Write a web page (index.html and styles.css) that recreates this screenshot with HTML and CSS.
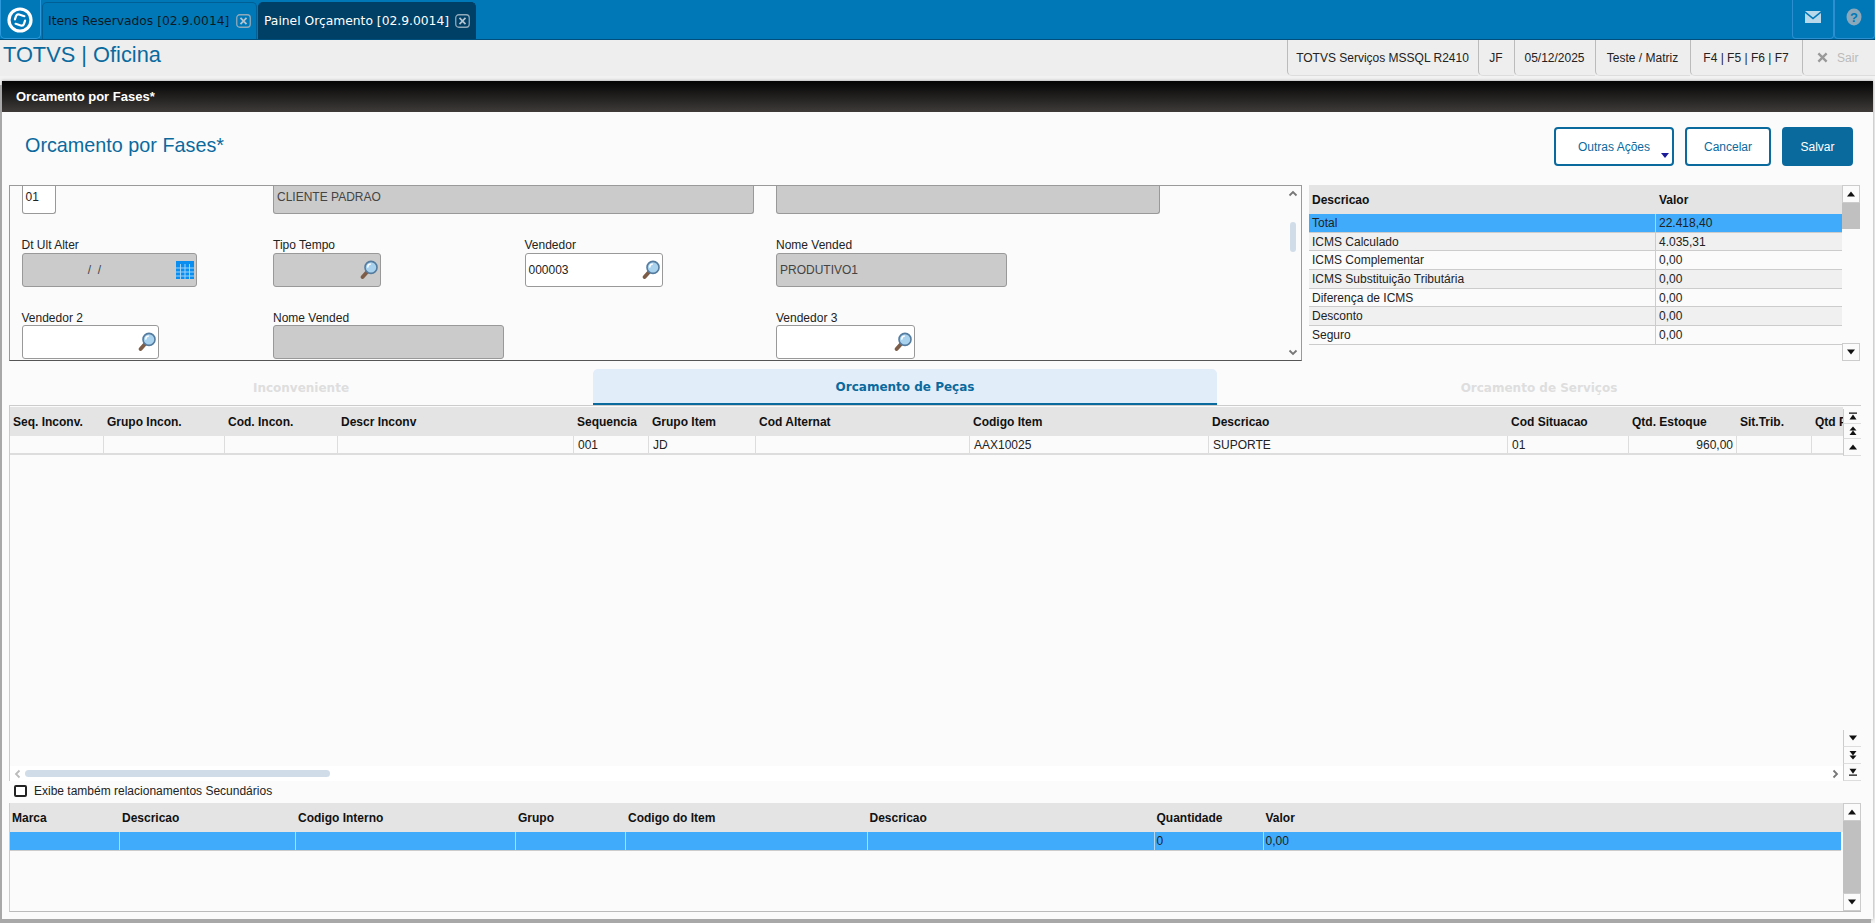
FILE: index.html
```html
<!DOCTYPE html>
<html lang="pt-BR">
<head>
<meta charset="utf-8">
<title>TOTVS | Oficina</title>
<link rel="stylesheet" href="styles.css">
</head>
<body>
<svg class="defs" width="0" height="0" aria-hidden="true">
  <defs>
    <symbol id="lupa" viewBox="0 0 18 20">
      <path d="M7.500 11.500 2.600 17" stroke="#7d5d48" stroke-width="3.800" stroke-linecap="round" fill="none"/>
      <circle cx="11" cy="7.400" r="6" fill="#a9d2ef" stroke="#557c9e" stroke-width="1.600"/>
      <path d="M7.800 7.600a3.400 3.400 0 0 1 3-3.600" stroke="#fff" stroke-width="1.500" fill="none"/>
    </symbol>
    <symbol id="up" viewBox="0 0 10 10"><path d="M5 2.500 9 7.500H1z" fill="#111"/></symbol>
    <symbol id="down" viewBox="0 0 10 10"><path d="M5 7.500 9 2.500H1z" fill="#111"/></symbol>
    <symbol id="first" viewBox="0 0 10 10"><path d="M1 1.500H9V2.700H1zM5 3.500 8.500 8.500H1.500z" fill="#111"/></symbol>
    <symbol id="last" viewBox="0 0 10 10"><path d="M1 7.500H9V8.700H1zM5 6.700 8.500 1.700H1.500z" fill="#111"/></symbol>
    <symbol id="pgup" viewBox="0 0 10 10"><path d="M5 0.500 8.500 4.500H1.500zM5 4.500 8.500 9H1.500z" fill="#111"/></symbol>
    <symbol id="pgdn" viewBox="0 0 10 10"><path d="M5 9.500 8.500 5.500H1.500zM5 5.500 8.500 1H1.500z" fill="#111"/></symbol>
    <symbol id="chev-up" viewBox="0 0 10 10"><path d="M1.500 6.500 5 3l3.500 3.500" stroke="#777" stroke-width="1.800" fill="none"/></symbol>
    <symbol id="chev-down" viewBox="0 0 10 10"><path d="M1.500 3.500 5 7l3.500-3.500" stroke="#777" stroke-width="1.800" fill="none"/></symbol>
    <symbol id="chev-left" viewBox="0 0 10 10"><path d="M6.500 1.500 3 5l3.500 3.500" stroke="#bbb" stroke-width="1.800" fill="none"/></symbol>
    <symbol id="chev-right" viewBox="0 0 10 10"><path d="M3.500 1.500 7 5 3.500 8.500" stroke="#777" stroke-width="1.800" fill="none"/></symbol>
    <symbol id="fechar" viewBox="0 0 15 14">
      <rect x="0.750" y="0.750" width="13.500" height="12.500" rx="3" fill="none" stroke="#8fa9ba" stroke-width="1.300"/>
      <path d="M4.500 3.800 10.500 10.200M10.500 3.800 4.500 10.200" stroke="#b5c5d0" stroke-width="1.700"/>
    </symbol>
  </defs>
</svg>

<nav class="topbar">
  <div class="logo-tab">
    <svg class="logo" viewBox="0 0 26 26" width="26" height="26" aria-label="TOTVS">
      <circle cx="13" cy="13" r="11" fill="none" stroke="#fff" stroke-width="3.200"/>
      <g transform="rotate(18 13 13)" fill="none" stroke="#fff" stroke-width="2.200" stroke-linecap="round">
        <path d="M8 14V10.500A2.500 2.500 0 0 1 10.500 8H16"/>
        <path d="M18 12V15.500A2.500 2.500 0 0 1 15.500 18H10"/>
      </g>
    </svg>
  </div>
  <div class="tab">
    <span>Itens Reservados [02.9.0014]</span>
    <svg class="tab-x" width="15" height="14"><use href="#fechar"/></svg>
  </div>
  <div class="tab tab-on">
    <span>Painel Orçamento [02.9.0014]</span>
    <svg class="tab-x" width="15" height="14"><use href="#fechar"/></svg>
  </div>
  <div class="top-actions">
    <div class="top-btn">
      <svg viewBox="0 0 16 12" width="16" height="12" aria-label="Mensagens"><path d="M0 0H16L8 6.500z" fill="#b9d9ea"/><path d="M0 2 8 8.500 16 2V12H0z" fill="#b9d9ea"/></svg>
    </div>
    <div class="top-btn">
      <svg viewBox="0 0 16 18" width="16" height="18" aria-label="Ajuda"><ellipse cx="8" cy="9" rx="7.500" ry="8.500" fill="#8aa8ba"/><text x="8" y="14" class="help-mark">?</text></svg>
    </div>
  </div>
</nav>

<header class="appbar">
  <div class="brand">TOTVS | Oficina</div>
  <ul class="status">
    <li class="s1">TOTVS Serviços MSSQL R2410</li>
    <li class="s2">JF</li>
    <li class="s3">05/12/2025</li>
    <li class="s4">Teste / Matriz</li>
    <li class="s5">F4 | F5 | F6 | F7</li>
    <li class="s6"><svg viewBox="0 0 12 12" width="11" height="11" aria-hidden="true"><path d="M1.500 1.500 10.500 10.500M10.500 1.500 1.500 10.500" stroke="#999" stroke-width="2.600"/></svg><span>Sair</span></li>
  </ul>
</header>

<main class="window">
  <div class="window-bar">Orcamento por Fases*</div>

  <div class="title-row">
    <h1>Orcamento por Fases*</h1>
    <div class="actions">
      <button class="btn btn-more">Outras Ações<i class="caret"></i></button>
      <button class="btn btn-cancel">Cancelar</button>
      <button class="btn btn-save">Salvar</button>
    </div>
  </div>

  <section class="upper">
    <div class="form-panel">
      <div class="form">
        <div class="cell cell-top"><div class="input cut w-a">01</div></div>
        <div class="cell cell-top"><div class="input cut off w-b">CLIENTE PADRAO</div></div>
        <div class="cell cell-top"></div>
        <div class="cell cell-top"><div class="input cut off w-c"></div></div>

        <div class="cell"><label>Dt Ult Alter</label>
          <div class="input off w-d date"><span class="date-mask">/&nbsp;&nbsp;/</span>
            <svg class="cal" viewBox="0 0 18 18" width="18" height="18" aria-hidden="true">
              <rect width="18" height="18" fill="#0a8ff0"/>
              <path d="M0 7H18M0 11H18M0 15H18M4.500 3V18M9 3V18M13.500 3V18" stroke="#9ed2f8" stroke-width="1"/>
            </svg>
          </div></div>
        <div class="cell"><label>Tipo Tempo</label>
          <div class="input off w-e"><svg class="lupa" width="18" height="20"><use href="#lupa"/></svg></div></div>
        <div class="cell"><label>Vendedor</label>
          <div class="input w-f">000003<svg class="lupa" width="18" height="20"><use href="#lupa"/></svg></div></div>
        <div class="cell"><label>Nome Vended</label>
          <div class="input off w-g">PRODUTIVO1</div></div>

        <div class="cell cell-low"><label>Vendedor 2</label>
          <div class="input w-h"><svg class="lupa" width="18" height="20"><use href="#lupa"/></svg></div></div>
        <div class="cell cell-low"><label>Nome Vended</label>
          <div class="input off w-i"></div></div>
        <div class="cell"></div>
        <div class="cell cell-low"><label>Vendedor 3</label>
          <div class="input w-j"><svg class="lupa" width="18" height="20"><use href="#lupa"/></svg></div></div>
      </div>
      <div class="thin-scroll">
        <svg width="10" height="10"><use href="#chev-up"/></svg>
        <div class="thin-track"><div class="thin-thumb"></div></div>
        <svg width="10" height="10"><use href="#chev-down"/></svg>
      </div>
    </div>

    <div class="totals">
      <div class="totals-body">
        <div class="t-row t-head"><div>Descricao</div><div>Valor</div></div>
        <div class="t-row t-sel"><div>Total</div><div>22.418,40</div></div>
        <div class="t-row t-alt"><div>ICMS Calculado</div><div>4.035,31</div></div>
        <div class="t-row"><div>ICMS Complementar</div><div>0,00</div></div>
        <div class="t-row t-alt"><div>ICMS Substituição Tributária</div><div>0,00</div></div>
        <div class="t-row"><div>Diferença de ICMS</div><div>0,00</div></div>
        <div class="t-row t-alt"><div>Desconto</div><div>0,00</div></div>
        <div class="t-row"><div>Seguro</div><div>0,00</div></div>
      </div>
      <div class="vbar vbar-totals">
        <div class="vbtn vbtn-a"><svg width="10" height="10"><use href="#up"/></svg></div>
        <div class="vthumb vthumb-totals"></div>
        <div class="vspace"></div>
        <div class="vbtn vbtn-a"><svg width="10" height="10"><use href="#down"/></svg></div>
      </div>
    </div>
  </section>

  <div class="tabs">
    <div class="ptab ptab-1">Inconveniente</div>
    <div class="ptab ptab-2 ptab-on">Orcamento de Peças</div>
    <div class="ptab ptab-3">Orcamento de Serviços</div>
  </div>

  <section class="pecas">
    <div class="pecas-main">
      <div class="m-clip">
        <div class="m-row m-head">
          <div>Seq. Inconv.</div><div>Grupo Incon.</div><div>Cod. Incon.</div><div>Descr Inconv</div><div>Sequencia</div><div>Grupo Item</div><div>Cod Alternat</div><div>Codigo Item</div><div>Descricao</div><div>Cod Situacao</div><div>Qtd. Estoque</div><div>Sit.Trib.</div><div>Qtd Pedida</div>
        </div>
        <div class="m-row m-data">
          <div></div><div></div><div></div><div></div><div>001</div><div>JD</div><div></div><div>AAX10025</div><div>SUPORTE</div><div>01</div><div class="num">960,00</div><div></div><div></div>
        </div>
      </div>
      <div class="hbar">
        <svg width="10" height="10"><use href="#chev-left"/></svg>
        <div class="hthumb"></div>
        <div class="hspace"></div>
        <svg width="10" height="10"><use href="#chev-right"/></svg>
      </div>
    </div>
    <div class="vbar vbar-main">
      <div class="vbtn vbtn-s"><svg width="10" height="10"><use href="#first"/></svg></div>
      <div class="vbtn vbtn-s"><svg width="10" height="10"><use href="#pgup"/></svg></div>
      <div class="vbtn"><svg width="10" height="10"><use href="#up"/></svg></div>
      <div class="vspace"></div>
      <div class="vbtn"><svg width="10" height="10"><use href="#down"/></svg></div>
      <div class="vbtn"><svg width="10" height="10"><use href="#pgdn"/></svg></div>
      <div class="vbtn"><svg width="10" height="10"><use href="#last"/></svg></div>
    </div>
  </section>

  <label class="check"><i class="box"></i>Exibe também relacionamentos Secundários</label>

  <section class="marcas">
    <div class="marcas-body">
      <div class="k-row k-head"><div>Marca</div><div>Descricao</div><div>Codigo Interno</div><div>Grupo</div><div>Codigo do Item</div><div>Descricao</div><div>Quantidade</div><div>Valor</div></div>
      <div class="k-row k-sel"><div></div><div></div><div></div><div></div><div></div><div></div><div>0</div><div>0,00</div></div>
    </div>
    <div class="vbar vbar-marcas">
      <div class="vbtn vbtn-a"><svg width="10" height="10"><use href="#up"/></svg></div>
      <div class="vthumb vthumb-marcas"></div>
      <div class="vbtn vbtn-a"><svg width="10" height="10"><use href="#down"/></svg></div>
    </div>
  </section>
</main>
</body>
</html>
```

FILE: styles.css
```css
* { box-sizing: border-box; }
html, body { margin: 0; padding: 0; }
body {
  width: 1875px;
  height: 923px;
  overflow: hidden;
  background: #f2f2f2;
  font: 12px "Liberation Sans", Arial, sans-serif;
  color: #222;
}
.defs { position: absolute; }

/* top tab bar */
.topbar {
  display: flex;
  height: 40px;
  background: #0078b8;
  border-bottom: 1px solid #004f7c;
}
.logo-tab {
  width: 41px;
  height: 39px;
  padding: 7px 0 0 6px;
  border: 1px solid #2b98dc;
  border-top: 0;
  border-radius: 0 0 5px 5px;
}
.logo { display: block; }
.tab {
  display: flex;
  align-items: center;
  width: 215px;
  height: 37px;
  margin: 2px 0 0 1px;
  padding: 0 5px 0 5px;
  border: 1px solid #005f94;
  border-bottom: 0;
  border-radius: 5px 5px 0 0;
  font: 12.300px "DejaVu Sans", sans-serif;
  color: #0b1a24;
}
.tab span { flex: 1; white-space: nowrap; }
.tab-on {
  width: 218px;
  background: #003f66;
  border-color: #003f66;
  color: #fff;
}
.tab-x { flex: none; }
.top-actions { display: flex; margin-left: auto; }
.top-btn {
  display: flex;
  align-items: center;
  justify-content: center;
  width: 41.500px;
  height: 39px;
  padding-bottom: 4px;
  border: 1px solid #2b8fd0;
  border-top: 0;
  border-radius: 0 0 4px 4px;
}
.help-mark { font: bold 13px "Liberation Sans", sans-serif; fill: #0078b8; text-anchor: middle; }

/* application bar */
.appbar {
  display: flex;
  justify-content: space-between;
  height: 36px;
  background: #eee;
}
.brand {
  padding: 0 0 0 3px;
  font-size: 21.800px;
  line-height: 30px;
  color: #0a6a9e;
}
.status {
  display: flex;
  margin: 0;
  padding: 0;
  list-style: none;
}
.status li {
  display: flex;
  align-items: center;
  justify-content: center;
  height: 36px;
  border-left: 1px solid #bbb;
  border-bottom: 1px solid #ddd;
  border-radius: 0 0 0 5px;
  color: #222;
}
.s1 { width: 191px; }
.s2 { width: 36px; }
.s3 { width: 81px; }
.s4 { width: 95px; }
.s5 { width: 112px; }
.s6 { width: 73.500px; gap: 9px; padding-right: 2px; }
.status .s6 { color: #bbb; }

/* window */
.window {
  width: 1871px;
  height: 838px;
  margin: 5px 0 0 2px;
  background: #fbfbfb;
  box-shadow: -2px 4px 0 #a8a8a8, 0 0 3px #999;
}
.window-bar {
  height: 31px;
  padding-left: 14px;
  background: linear-gradient(#040404, #3e3b39);
  font-weight: bold;
  font-size: 13px;
  line-height: 31px;
  color: #fff;
}
.title-row {
  display: flex;
  justify-content: space-between;
  height: 73px;
  padding: 15px 20px 0 23px;
}
h1 {
  margin: 0;
  padding-top: 4px;
  font-weight: normal;
  font-size: 19.800px;
  line-height: 28px;
  color: #0a6a9e;
}
.actions { display: flex; gap: 11px; }
.btn {
  height: 39px;
  padding: 0;
  border: 2px solid #0a6a9e;
  border-radius: 4px;
  background: #fff;
  font: 12px "Liberation Sans", sans-serif;
  color: #0a6a9e;
}
.btn-more { display: flex; align-items: center; width: 120px; padding-left: 22px; position: relative; }
.btn-cancel { width: 86px; }
.btn-save { width: 71px; background: #0a6a9e; color: #fff; }
.caret {
  position: absolute;
  right: 3px;
  bottom: 6px;
  border: 4px solid transparent;
  border-top: 5px solid #1b1b9a;
  border-bottom: 0;
}

/* upper section */
.upper { display: flex; height: 176px; padding-left: 7px; gap: 7px; }
.form-panel {
  display: flex;
  width: 1293px;
  height: 176px;
  border: 1px solid #9a9a9a;
  border-bottom-color: #555;
  background: #fbfbfb;
}
.form {
  flex: 1;
  display: grid;
  grid-template-columns: repeat(4, 251.500px);
  grid-template-rows: 28px 72px 72px;
  padding-left: 11.500px;
}
.cell label { display: block; height: 14px; margin-top: 24px; margin-bottom: 1px; line-height: 14px; color: #222; }
.cell-low label { margin-top: 25px; margin-bottom: 0; }
.cell-top { height: 28px; }
.input {
  display: flex;
  align-items: center;
  height: 34px;
  padding-left: 3px;
  border: 1px solid #999;
  border-radius: 3px;
  background: #fff;
  color: #222;
}
.cut { height: 28px; padding-bottom: 6px; border-top: 0; border-radius: 0 0 3px 3px; }
.off { background: #cbcbcb; color: #444; }
.w-a { width: 34px; }
.w-b { width: 481px; }
.w-c { width: 384px; }
.w-d { width: 175px; }
.w-e { width: 108px; }
.w-f { width: 138px; }
.w-g { width: 231px; }
.w-h { width: 137px; }
.w-i { width: 231px; }
.w-j { width: 139px; }
.lupa { margin-left: auto; margin-right: 2px; }
.date { padding: 0 2px 0 0; }
.date-mask { flex: 1; text-align: center; padding-right: 9px; }
.cal { flex: none; }
.thin-scroll {
  display: flex;
  flex-direction: column;
  align-items: center;
  width: 16px;
  padding: 3px 0;
}
.thin-track { flex: 1; width: 6px; padding-top: 23px; }
.thin-thumb { width: 6px; height: 30px; border-radius: 3px; background: #d0dce8; }

.totals { display: flex; width: 551px; height: 176px; }
.totals-body { width: 533px; }
.t-row {
  display: grid;
  grid-template-columns: 347px 186px;
  height: 18.670px;
  border-bottom: 1px solid #ccc;
  line-height: 19px;
}
.t-row div { padding-left: 3px; }
.t-row div:first-child { border-right: 1px solid #ccc; }
.t-head {
  height: 29px;
  background: #e4e4e4;
  border: 0;
  font-weight: bold;
  line-height: 31px;
  color: #111;
}
.t-head div:first-child { border: 0; }
.t-sel { background: #3fabfa; }
.t-alt { background: #f0f0f0; }

/* shared scrollbars */
.vbar { display: flex; flex-direction: column; width: 18px; }
.vbtn {
  display: flex;
  align-items: center;
  justify-content: center;
  height: 17px;
  background: #fbfbfb;
  border-left: 1px solid #ccc;
  border-bottom: 1px solid #ddd;
}
.vbtn-a { height: 18px; border: 1px solid #ccc; }
.vbtn-s { height: 15px; }
.vthumb { background: #c0c0c0; }
.vspace { flex: 1; }
.vthumb-totals { height: 26px; }

/* tabs */
.tabs {
  display: grid;
  grid-template-columns: 584px 624px 644px;
  height: 36px;
  margin: 8px 0 0 7px;
}
.ptab {
  display: flex;
  align-items: center;
  justify-content: center;
  padding-top: 2px;
  font: bold 12px "DejaVu Sans", sans-serif;
  color: #dedede;
}
.ptab-on {
  background: #e1edf9;
  border-bottom: 2px solid #0a6a9e;
  border-radius: 5px 5px 0 0;
  color: #0a6a9e;
}

/* main grid */
.pecas {
  display: flex;
  width: 1852px;
  height: 376px;
  margin-left: 7px;
  border-top: 1px solid #ccc;
  border-left: 1px solid #ccc;
}
.pecas-main { display: flex; flex-direction: column; width: 1833px; }
.m-clip { flex: 1; overflow: hidden; }
.m-row {
  display: grid;
  grid-template-columns: 94px 121px 113px 236px 75px 107px 214px 239px 299px 121px 108px 75px 70px;
  width: 1900px;
  white-space: nowrap;
}
.m-head {
  height: 29px;
  margin-top: 1px;
  background: #e4e4e4;
  font-weight: bold;
  line-height: 30px;
  color: #111;
}
.m-head div { padding-left: 3px; }
.m-data { height: 19px; border-bottom: 2px solid #ddd; line-height: 19px; }
.m-data div { padding: 0 3px 0 4px; border-right: 1px solid #ddd; }
.m-data .num { text-align: right; }
.hbar {
  display: flex;
  align-items: center;
  flex: none;
  height: 15px;
  padding: 0 3px;
  background: #fff;
}
.hthumb { width: 305px; height: 7px; margin-left: 2px; border-radius: 4px; background: #d0dce8; }
.hspace { flex: 1; }
.vbar-main { padding-top: 3px; }

/* checkbox */
.check {
  display: flex;
  align-items: center;
  height: 22px;
  padding: 0 0 2px 12px;
  gap: 7px;
}
.box { width: 13px; height: 12px; border: 2px solid #222; border-radius: 2px; background: #fff; }

/* bottom grid */
.marcas {
  display: flex;
  width: 1852px;
  height: 109px;
  margin-left: 7px;
  border-left: 1px solid #ccc;
  border-bottom: 1px solid #bbb;
}
.marcas-body { width: 1833px; }
.k-row {
  display: grid;
  grid-template-columns: 110px 176px 220px 110px 241.500px 287px 109px 1fr;
}
.k-head { height: 29px; background: #e4e4e4; font-weight: bold; line-height: 30px; color: #111; }
.k-head div { padding-left: 2px; }
.k-sel { height: 19px; margin-right: 2px; background: #3fabfa; border-bottom: 1px solid #ccc; line-height: 18px; }
.k-sel div { padding-left: 2px; border-right: 1px solid #b6d8f2; }
.k-sel div:last-child { border-right: 0; }
.vthumb-marcas { flex: 1; }
```
